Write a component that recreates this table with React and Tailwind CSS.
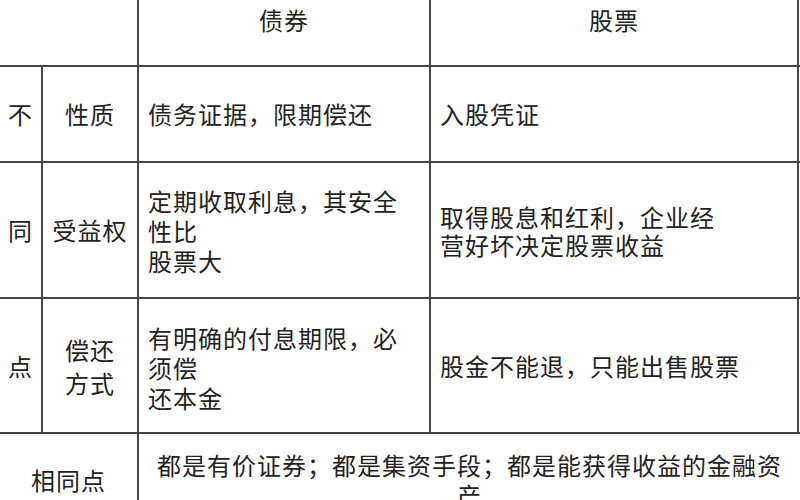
export default function App() {
  const font = { fontFamily: '"Noto Sans CJK SC", "Noto Sans", sans-serif' };
  const cell = "bg-white text-[24px] leading-[30px] tracking-[1px] text-[#222] flex";
  return (
    <div className="w-[800px] h-[500px] overflow-hidden bg-white" style={font}>
      <div className="grid grid-cols-[41px_94px_290px_366px_1px] grid-rows-[65px_94px_134px_133px_92px] gap-[2px] bg-[#454545] w-[801px]">
        {/* header */}
        <div className={`${cell} col-span-2`}></div>
        <div className={`${cell} justify-center items-start pt-[5px]`}>债券</div>
        <div className={`${cell} justify-center items-start pt-[5px]`}>股票</div>
        <div className="bg-white"></div>

        {/* row 性质 */}
        <div className={`${cell} justify-center items-center`}>不</div>
        <div className={`${cell} justify-center items-center`}>性质</div>
        <div className={`${cell} items-center pl-[9px]`}>债务证据，限期偿还</div>
        <div className={`${cell} items-center pl-[9px]`}>入股凭证</div>
        <div className="bg-white"></div>

        {/* row 受益权 */}
        <div className={`${cell} justify-center items-center`}>同</div>
        <div className={`${cell} justify-center items-center`}>受益权</div>
        <div className={`${cell} items-center pl-[9px] pt-[2px]`}>
          <div>定期收取利息，其安全<br />性比<br />股票大</div>
        </div>
        <div className={`${cell} items-center pl-[9px] pt-[2px]`}>
          <div className="leading-[28px]">取得股息和红利，企业经<br />营好坏决定股票收益</div>
        </div>
        <div className="bg-white"></div>

        {/* row 偿还方式 */}
        <div className={`${cell} justify-center items-center`}>点</div>
        <div className={`${cell} justify-center items-center`}>
          <div className="text-center leading-[33px]">偿还<br />方式</div>
        </div>
        <div className={`${cell} items-center pl-[9px] pt-[4px]`}>
          <div>有明确的付息期限，必<br />须偿<br />还本金</div>
        </div>
        <div className={`${cell} items-center pl-[9px]`}>股金不能退，只能出售股票</div>
        <div className="bg-white"></div>

        {/* bottom row */}
        <div className={`${cell} col-span-2 justify-center items-center`}>相同点</div>
        <div className={`${cell} col-span-3 items-center justify-center px-[10px] text-center`}>
          <div>都是有价证券；都是集资手段；都是能获得收益的金融资产</div>
        </div>
      </div>
    </div>
  );
}
